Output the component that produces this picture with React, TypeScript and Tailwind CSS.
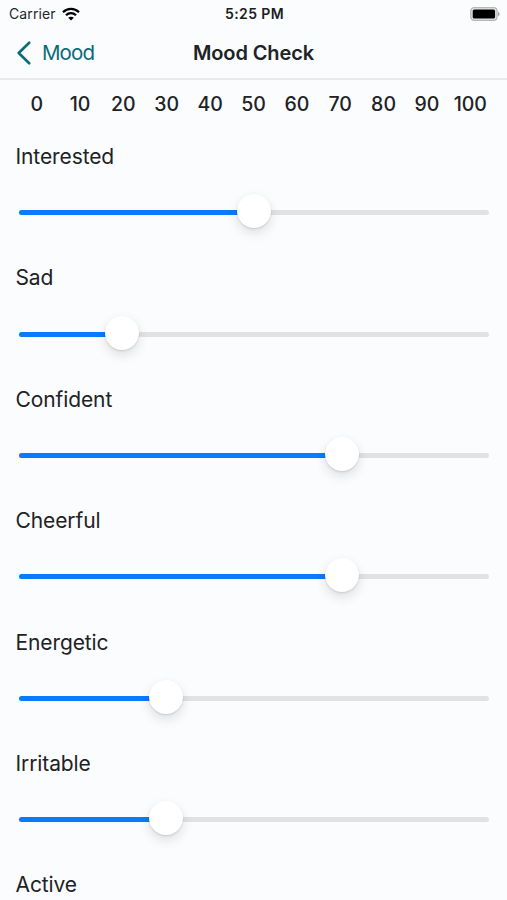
import React from 'react';

const scale = [0, 10, 20, 30, 40, 50, 60, 70, 80, 90, 100];

const moods = [
  { label: 'Interested', value: 50 },
  { label: 'Sad', value: 20 },
  { label: 'Confident', value: 70 },
  { label: 'Cheerful', value: 70 },
  { label: 'Energetic', value: 30 },
  { label: 'Irritable', value: 30 },
  { label: 'Active', value: 50 },
];

function StatusBar() {
  return (
    <div className="grid grid-cols-3 items-center h-[27px] shrink-0 pl-[9px] pr-[7px] text-black">
      <div className="flex items-center gap-[6px]">
        <span className="text-[14px] tracking-[0.1px] text-[#252628]">Carrier</span>
        <svg width="18" height="14" viewBox="0 0 18 14" fill="none" stroke="currentColor" strokeWidth="2.3">
          <path d="M1 5.2C5.5 0.7 12.5 0.7 17 5.2" />
          <path d="M4 8.2C6.8 5.4 11.2 5.4 14 8.2" />
          <path d="M9 13.6L6.2 10.8C7.8 9.3 10.2 9.3 11.8 10.8Z" fill="currentColor" stroke="none" />
        </svg>
      </div>
      <span className="text-center text-[14px] font-semibold tracking-[0.4px] text-[#1c1d1f]">5:25 PM</span>
      <svg className="justify-self-end" width="30" height="14" viewBox="0 0 30 14">
        <rect x="0.8" y="0.6" width="26.2" height="12.8" rx="3.4" fill="#e4e5e6" stroke="#b5b6b7" strokeWidth="1.3" />
        <rect x="2.7" y="2.4" width="22.4" height="9.2" rx="1.6" fill="#000" />
        <path d="M28 4.8C30.2 5.7 30.2 8.3 28 9.2Z" fill="#a6a7a8" />
      </svg>
    </div>
  );
}

function Header() {
  return (
    <header className="grid grid-cols-3 items-center h-[53px] shrink-0 border-b-2 border-[#e9eaec] px-[17px]">
      <button className="flex items-center gap-[11px] text-[#0a6b78]">
        <svg width="14" height="24" viewBox="0 0 14 24" fill="none" stroke="currentColor" strokeWidth="2.6" strokeLinecap="round" strokeLinejoin="round">
          <path d="M12.2 1.7L1.7 12L12.2 22.3" />
        </svg>
        <span className="pt-px text-[20.5px] tracking-[-0.9px]">Mood</span>
      </button>
      <h1 className="text-center text-[20px] font-semibold tracking-[-0.1px] whitespace-nowrap">Mood Check</h1>
    </header>
  );
}

function MoodSlider({ label, value }: { label: string; value: number }) {
  return (
    <div className="h-[121.4px] shrink-0 pl-[15px] pr-[18px]">
      <p className="pl-[0.5px] text-[21px] leading-[28px] tracking-[-0.1px]">{label}</p>
      <div className="ml-1 mt-[39.3px] h-[5px] rounded-full bg-[#e1e2e4] relative">
        <div className="h-full rounded-full bg-[#0a7aff]" style={{ width: `${15 + value * 4.4}px` }} />
        {/* thumb */}
        <div
          className="absolute -top-[16px] -ml-[17px] size-[34px] rounded-full bg-white shadow-[0_5px_12px_rgba(0,0,0,0.12),0_1px_2px_rgba(0,0,0,0.12)]"
          style={{ left: `${15 + value * 4.4}px` }}
        />
      </div>
    </div>
  );
}

export default function App() {
  return (
    <main className="flex flex-col w-full h-[900px] overflow-hidden bg-[#fbfcfe] font-['Inter','Liberation_Sans',sans-serif] text-[#212225]">
      <StatusBar />
      <Header />
      <div className="flex items-center h-[50px] shrink-0 px-[15px]">
        {scale.map((n) => (
          <span key={n} className="flex-1 basis-0 text-center text-[19.5px] font-medium">{n}</span>
        ))}
      </div>
      <section className="flex flex-col pt-[13px]">
        {moods.map((mood) => (
          <MoodSlider key={mood.label} label={mood.label} value={mood.value} />
        ))}
      </section>
    </main>
  );
}
